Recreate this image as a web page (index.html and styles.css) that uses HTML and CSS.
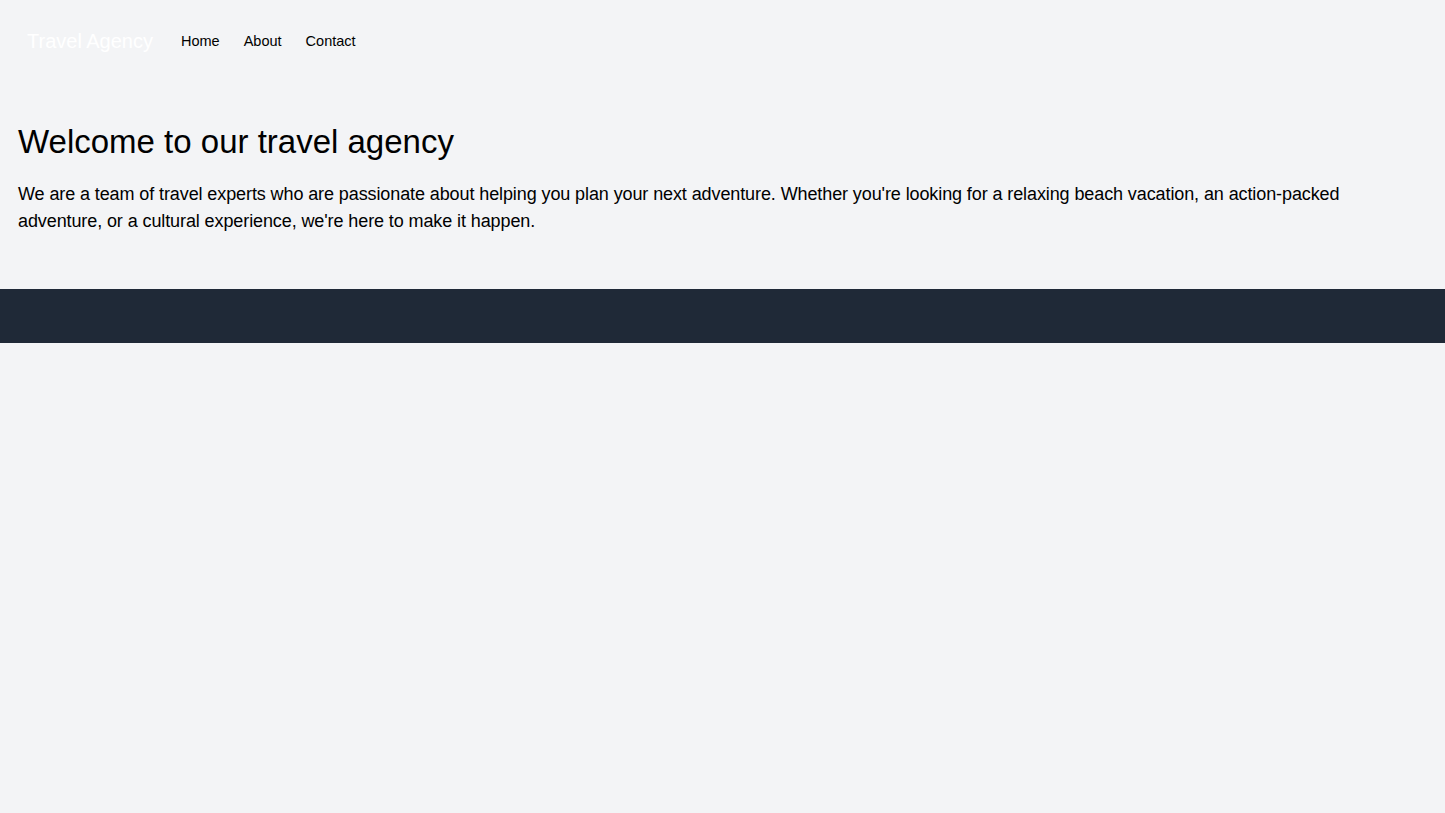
FILE: index.html
```html
<!DOCTYPE html>
<html lang="en">
<head>
<meta charset="utf-8">
<title>Travel Agency</title>
<link rel="stylesheet" href="styles.css">
</head>
<body>
<nav class="nav">
  <a class="brand" href="#">Travel Agency</a>
  <ul class="links">
    <li><a href="#">Home</a></li>
    <li><a href="#">About</a></li>
    <li><a href="#">Contact</a></li>
  </ul>
</nav>
<main class="main">
  <h1 class="title">Welcome to our travel agency</h1>
  <p class="lead">We are a team of travel experts who are passionate about helping you plan your next adventure. Whether you're looking for a relaxing beach vacation, an action-packed adventure, or a cultural experience, we're here to make it happen.</p>
</main>
<footer class="footer"></footer>
</body>
</html>
```
FILE: styles.css
```css
* { box-sizing: border-box; }
html, body { margin: 0; padding: 0; }
body {
  background: #f3f4f6;
  color: #000;
  font-family: "Liberation Sans", Arial, sans-serif;
  min-height: 813px;
}
a { text-decoration: none; color: inherit; }
.nav {
  display: flex;
  align-items: center;
  padding: 0 27px;
  height: 82px;
}
.brand {
  color: #fff;
  font-size: 20px;
  line-height: 28px;
  margin-right: 28px;
}
.links {
  display: flex;
  gap: 24px;
  list-style: none;
  margin: 0;
  padding: 0;
  font-size: 14.5px;
  line-height: 20px;
}
.main {
  padding: 40px 18px 54px;
}
.title {
  margin: 0 0 19px;
  font-size: 33px;
  font-weight: 400;
  line-height: 40px;
}
.lead {
  margin: 0;
  font-size: 18px;
  line-height: 27px;
  letter-spacing: -0.1px;
  max-width: 1380px;
}
.footer {
  background: #1f2937;
  height: 54px;
}
```
